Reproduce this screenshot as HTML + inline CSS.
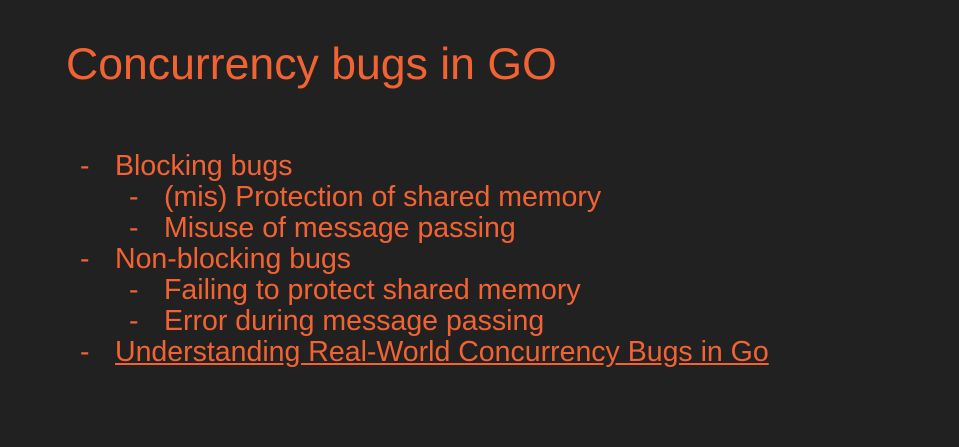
<!DOCTYPE html>
<html><head><style>
body{margin:0;width:959px;height:447px;background:#212121;overflow:hidden;font-family:"Liberation Sans",Arial,sans-serif;color:#f26333;}
.t{position:absolute;left:66px;top:40px;font-size:44.6px;white-space:nowrap;}
.l{position:absolute;font-size:28.5px;line-height:31px;white-space:nowrap;}
a{color:#f26333;text-decoration:underline;}
</style></head><body>
<div class="t">Concurrency bugs in GO</div>
<div class="l" style="top:151px;left:80px">-</div><div class="l" style="top:151px;left:115px">Blocking bugs</div>
<div class="l" style="top:182px;left:129px">-</div><div class="l" style="top:182px;left:164px">(mis) Protection of shared memory</div>
<div class="l" style="top:213px;left:129px">-</div><div class="l" style="top:213px;left:164px">Misuse of message passing</div>
<div class="l" style="top:244px;left:80px">-</div><div class="l" style="top:244px;left:115px">Non-blocking bugs</div>
<div class="l" style="top:275px;left:129px">-</div><div class="l" style="top:275px;left:164px">Failing to protect shared memory</div>
<div class="l" style="top:306px;left:129px">-</div><div class="l" style="top:306px;left:164px">Error during message passing</div>
<div class="l" style="top:337px;left:80px">-</div><div class="l" style="top:337px;left:115px"><a>Understanding Real-World Concurrency Bugs in Go</a></div>
</body></html>
